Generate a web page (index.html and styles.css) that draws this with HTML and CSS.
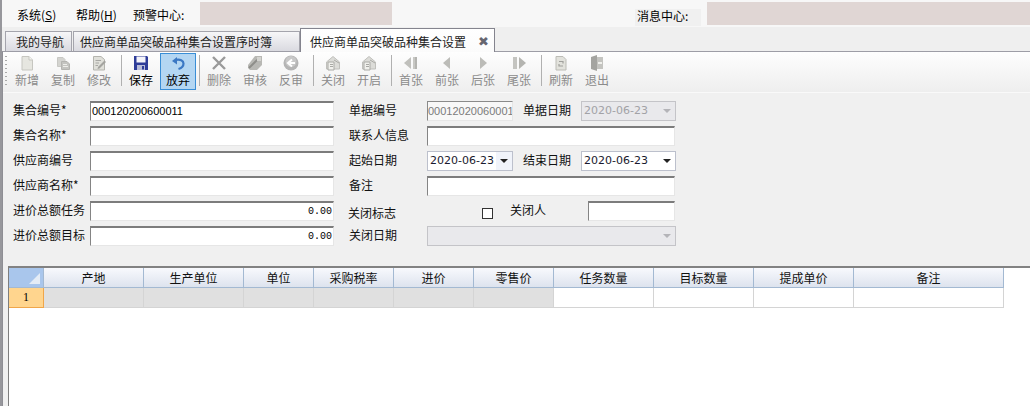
FILE: index.html
```html
<!DOCTYPE html>
<html lang="zh-CN">
<head>
<meta charset="utf-8">
<title>供应商单品突破品种集合设置</title>
<link rel="stylesheet" href="styles.css">
</head>
<body>
<div class="app">
  <header class="menubar">
    <span class="menu menu-sys">系统(<u>S</u>)</span>
    <span class="menu menu-help">帮助(<u>H</u>)</span>
    <span class="menu-label label-alert">预警中心:</span>
    <span class="pink pink-alert"></span>
    <span class="menu-label label-msg">消息中心:</span>
    <span class="pink pink-msg"></span>
  </header>
  <nav class="tabs">
    <div class="tab tab-nav">我的导航</div>
    <div class="tab tab-time">供应商单品突破品种集合设置序时簿</div>
    <div class="tab tab-active">供应商单品突破品种集合设置<span class="tab-close">✖</span></div>
  </nav>
  <main class="panel">
    <div class="toolbar">
      <span class="grip"></span>
      <div class="tool"><svg class="ico" viewBox="0 0 16 16"><path d="M3 1.5H10L13.5 5V15H3Z" fill="#e6e6e0" stroke="#c6c6c0"/><path d="M10 1.5V5H13.5" fill="#f6f6f2" stroke="#c6c6c0"/></svg><span>新增</span></div>
      <div class="tool"><svg class="ico" viewBox="0 0 16 16"><path d="M2.5 2.5H8L10 4.5V11.5H2.5Z" fill="#d4d4d0" stroke="#c8c8c4"/><path d="M6.5 6.5H12L14.5 9V14.5H6.5Z" fill="#c4c4c0" stroke="#b4b4b0"/><path d="M8 9.5H12M8 11.5H13" stroke="#eeeeea"/></svg><span>复制</span></div>
      <div class="tool"><svg class="ico" viewBox="0 0 16 16"><path d="M2.5 1.5H10L13.5 4.5V15H2.5Z" fill="#e0e0da" stroke="#b4b4ae"/><path d="M4.5 5.5H10M4.5 8H8M4.5 10.5H7" stroke="#a8a8a4"/><path d="M7 12L13.5 5.5L15 7L8.500 13.500L6.500 14Z" fill="#a4a4a0"/></svg><span>修改</span></div>
      <span class="sep"></span>
      <div class="tool on"><svg class="ico" viewBox="0 0 16 16"><path d="M1 1H14L15 2V15H1Z" fill="#2e3c98"/><path d="M3.500 1.500H12.500V7.500H3.500Z" fill="#f4f4fa"/><path d="M4 10H12V15H4Z" fill="#b8bcd8"/><path d="M9 11H11V14.500H9Z" fill="#2e3c98"/></svg><span>保存</span></div>
      <div class="tool on hot"><svg class="ico" viewBox="0 0 16 16"><path d="M2 6L7 2V9.500Z" fill="#3b78c4"/><path d="M6 4.800C10 4 13.500 5.500 13.500 8.500C13.500 11 12 13 8.500 14" fill="none" stroke="#3b78c4" stroke-width="2.200"/></svg><span>放弃</span></div>
      <span class="sep"></span>
      <div class="tool"><svg class="ico" viewBox="0 0 16 16"><path d="M2 2L14 14M14 2L2 14" stroke="#9a9a9a" stroke-width="2.400" fill="none"/></svg><span>删除</span></div>
      <div class="tool"><svg class="ico" viewBox="0 0 16 16"><path d="M8 1H15V10L10 15H3L1 13V10Z" fill="#b8b8b4"/><path d="M2 13L9 6L13 3" stroke="#8e8e8a" stroke-width="2" fill="none"/><path d="M10 2H14V6H10Z" fill="#d4d4d0"/></svg><span>审核</span></div>
      <div class="tool"><svg class="ico" viewBox="0 0 16 16"><circle cx="8" cy="8" r="7.500" fill="#b4b4b4"/><circle cx="8" cy="6.500" r="5.500" fill="#c8c8c8"/><path d="M12 8H7M9 4.500L5 8L9 11.500" stroke="#fff" stroke-width="2" fill="none"/></svg><span>反审</span></div>
      <span class="sep"></span>
      <div class="tool"><svg class="ico" viewBox="0 0 16 16"><path d="M1.500 7L8 1.500L14.500 7V14H1.500Z" fill="#dcdcd8" stroke="#c0c0bc"/><path d="M3 7H9V15H3Z" fill="#f0f0ec" stroke="#aaaaa6"/><path d="M5 9.500H8M5 11.500H8" stroke="#a8a8a4"/><path d="M9 5L14 8" stroke="#aaaaa6"/></svg><span>关闭</span></div>
      <div class="tool"><svg class="ico" viewBox="0 0 16 16"><path d="M1.500 7L8 1.500L14.500 7V14H1.500Z" fill="#dcdcd8" stroke="#c0c0bc"/><path d="M3 7H9V15H3Z" fill="#f0f0ec" stroke="#aaaaa6"/><path d="M5 9.500H8M5 11.500H8" stroke="#a8a8a4"/><path d="M9 5L14 8" stroke="#aaaaa6"/></svg><span>开启</span></div>
      <span class="sep"></span>
      <div class="tool"><svg class="ico" viewBox="0 0 16 16"><path d="M8 2V14L1 8Z" fill="#c0c0bc"/><path d="M10 2H14V14H10Z" fill="#b4b4b0"/><path d="M11 2V14" stroke="#dcdcd8"/></svg><span>首张</span></div>
      <div class="tool"><svg class="ico" viewBox="0 0 16 16"><path d="M11 2V14L4 8Z" fill="#bcbcb8"/></svg><span>前张</span></div>
      <div class="tool"><svg class="ico" viewBox="0 0 16 16"><path d="M5 2V14L12 8Z" fill="#bcbcb8"/></svg><span>后张</span></div>
      <div class="tool"><svg class="ico" viewBox="0 0 16 16"><path d="M2 2H6V14H2Z" fill="#c4c4c0"/><path d="M8 2V14L15 8Z" fill="#b4b4b0"/></svg><span>尾张</span></div>
      <span class="sep"></span>
      <div class="tool"><svg class="ico" viewBox="0 0 16 16"><path d="M3 1.500H10L13 4.500V15H3Z" fill="#e2e2dc" stroke="#bcbcb6"/><path d="M6 6.500H10V8.500M10 11H6V9" stroke="#a0a09c" fill="none" stroke-width="1.200"/></svg><span>刷新</span></div>
      <div class="tool"><svg class="ico" viewBox="0 0 16 16"><path d="M2 2H14V14H2Z" fill="#c4c4c0"/><path d="M2 2L8 0V16L2 14Z" fill="#a4a4a0"/><path d="M9 7H13V9H9Z" fill="#f0f0ec"/></svg><span>退出</span></div>
    </div>

    <form class="form">
      <label class="lbl">集合编号*</label>
      <div class="inp">000120200600011</div>
      <label class="lbl">单据编号</label>
      <div class="pair">
        <div class="inp inp-code">00012020060001</div>
        <label class="lbl lbl-mid">单据日期</label>
        <div class="sel off"><span>2020-06-23</span><i class="arrow"></i></div>
      </div>

      <label class="lbl">集合名称*</label>
      <div class="inp"></div>
      <label class="lbl">联系人信息</label>
      <div class="inp inp-right"></div>

      <label class="lbl">供应商编号</label>
      <div class="inp"></div>
      <label class="lbl">起始日期</label>
      <div class="pair">
        <div class="sel sel-start"><span>2020-06-23</span><i class="arrow arrow-box"></i></div>
        <label class="lbl lbl-mid">结束日期</label>
        <div class="sel"><span>2020-06-23</span><i class="arrow"></i></div>
      </div>

      <label class="lbl">供应商名称*</label>
      <div class="inp"></div>
      <label class="lbl">备注</label>
      <div class="inp inp-right"></div>

      <label class="lbl">进价总额任务</label>
      <div class="inp num">0.00</div>
      <label class="lbl lbl-flag">关闭标志</label>
      <div class="pair pair-close">
        <i class="check"></i>
        <label class="lbl lbl-closer">关闭人</label>
        <div class="inp inp-closer"></div>
      </div>

      <label class="lbl">进价总额目标</label>
      <div class="inp num">0.00</div>
      <label class="lbl">关闭日期</label>
      <div class="sel off sel-wide"><span></span><i class="arrow"></i></div>
    </form>

    <section class="grid-wrap">
      <div class="grid">
        <div class="gh corner"></div>
        <div class="gh">产地</div>
        <div class="gh">生产单位</div>
        <div class="gh">单位</div>
        <div class="gh">采购税率</div>
        <div class="gh">进价</div>
        <div class="gh">零售价</div>
        <div class="gh">任务数量</div>
        <div class="gh">目标数量</div>
        <div class="gh">提成单价</div>
        <div class="gh">备注</div>
        <div class="rowhead">1</div>
        <div class="gc ro"></div>
        <div class="gc ro"></div>
        <div class="gc ro"></div>
        <div class="gc ro"></div>
        <div class="gc ro"></div>
        <div class="gc ro"></div>
        <div class="gc"></div>
        <div class="gc"></div>
        <div class="gc"></div>
        <div class="gc"></div>
      </div>
    </section>
  </main>
</div>
</body>
</html>
```

FILE: styles.css
```css
* { box-sizing: border-box; }
html, body { margin: 0; padding: 0; }
body {
  width: 1030px;
  height: 406px;
  overflow: hidden;
  background: #f0f0f0;
  color: #000;
  font: 12px/16px "Noto Sans CJK SC", "Liberation Sans", sans-serif;
}
.app {
  height: 406px;
  display: flex;
  flex-direction: column;
  border-left: 2px solid #97979c;
  background: #efefef;
}

/* menu */
.menubar {
  height: 27px;
  flex: none;
  display: flex;
  align-items: flex-start;
  background: #f7f7f7;
  padding-top: 2px;
}
.menu, .menu-label { line-height: 26px; white-space: nowrap; }
.menu-sys { margin-left: 15px; width: 59px; }
.menu-help { width: 57px; }
.label-alert { width: 67px; }
.label-msg {
  width: 66px;
  margin-top: 7px;
  height: 17px;
  line-height: 13px;
  padding-left: 2px;
  background: #f0f0f0;
}
.pink { display: block; height: 23px; background: #e0d6d4; }
.pink-alert { width: 192px; margin-right: 243px; }
.pink-msg { flex: 1; margin-left: 6px; }

/* tabs */
.tabs {
  height: 24px;
  flex: none;
  display: flex;
  align-items: flex-end;
  padding-left: 3px;
  position: relative;
  z-index: 1;
}
.tab {
  height: 20px;
  line-height: 20px;
  border: 1px solid #a4a4ac;
  border-bottom: none;
  background: linear-gradient(#f6f6f8, #dadae0);
  color: #222;
  white-space: nowrap;
}
.tab-nav { width: 67px; padding-left: 10px; margin-right: 1px; }
.tab-time { width: 227px; padding-left: 6px; }
.tab-active {
  width: 195px;
  height: 24px;
  margin-bottom: -1px;
  line-height: 25px;
  padding-left: 9px;
  border-color: #84848e;
  background: linear-gradient(#fff, #fbfbfb);
  display: flex;
}
.tab-close {
  margin-left: 12px;
  font: 13px/25px "DejaVu Sans", sans-serif;
  color: #666670;
}

/* panel */
.panel {
  flex: 1;
  min-height: 0;
  display: flex;
  flex-direction: column;
  border-top: 1px solid #9d9da6;
  border-left: 1px solid #8e8e94;
  background: #f0f0f0;
}

/* toolbar */
.toolbar {
  height: 41px;
  flex: none;
  display: flex;
  padding-top: 1px;
  background: linear-gradient(#fefefe, #eeeeee);
  border-bottom: 1px solid #f9f9f9;
}
.grip {
  width: 2px;
  height: 30px;
  margin: 3px 2px 0 2px;
  background: repeating-linear-gradient(#a8a8a8 0 1px, transparent 1px 4px);
  flex: none;
}
.tool {
  width: 36px;
  height: 37px;
  flex: none;
  display: flex;
  flex-direction: column;
  align-items: center;
  padding-top: 2px;
  color: #8b8b8b;
}
.tool.on { color: #000; }
.tool.hot {
  margin: 0 -1px 0 1px;
  background: #b4d6f2;
  border: 1px solid #3a8ed6;
  padding-top: 1px;
}
.ico { width: 16px; height: 16px; display: block; flex: none; }
.tool span { line-height: 16px; margin-top: 1px; white-space: nowrap; }
.sep {
  width: 6px;
  height: 31px;
  flex: none;
  margin-top: 2px;
  background: linear-gradient(#b0b0b0, #b0b0b0) 4px 0 / 1px 100% no-repeat;
}

/* form */
.form {
  flex: none;
  display: grid;
  grid-template-columns: 77px 244px 93px 249px;
  grid-auto-rows: 20px;
  row-gap: 5px;
  column-gap: 0;
  padding: 8px 0 0 10px;
  height: 173px;
}
.lbl { line-height: 18px; white-space: nowrap; color: #111; }
.form > .lbl:nth-child(4n+3) { margin-left: 15px; }
.form > .lbl.lbl-flag { margin-left: 14px; line-height: 24px; }
.inp {
  height: 20px;
  background: #fff;
  border-style: solid;
  border-width: 2px 1px 1px 1px;
  border-color: #7c7c7c #e6e6e6 #e6e6e6 #848484;
  font: 11px/17px "Liberation Sans", sans-serif;
  padding-left: 1px;
  overflow: hidden;
  white-space: nowrap;
}
.inp-right { width: 248px; }
.num {
  text-align: right;
  font: 10px/17px "Liberation Mono", monospace;
  padding-right: 1px;
}
.pair { display: flex; }
.inp-code {
  width: 86px;
  flex: none;
  color: #7b7b7b;
  border-color: #8a8a8a #e6e6e6 #e6e6e6 #8a8a8a;
  border-top-width: 1px;
  line-height: 18px;
  padding-left: 0;
  background: #f8f8f8;
}
.lbl-mid { width: 58px; margin-left: 10px; flex: none; }
.sel {
  height: 20px;
  width: 95px;
  flex: none;
  display: flex;
  align-items: center;
  justify-content: space-between;
  background: #fff;
  border: 1px solid #bcc0cc;
  font: 11px/18px "DejaVu Sans", sans-serif;
  color: #1a1a2e;
  padding-left: 2px;
  white-space: nowrap;
}
.sel-start { width: 86px; flex: none; }
.sel.off { background: #e9e9ec; color: #a2a2a6; border-color: #c4c4c8; }
.sel-wide { width: 249px; }
.arrow {
  width: 16px;
  align-self: stretch;
  flex: none;
  position: relative;
  display: block;
}
.arrow::after {
  content: "";
  position: absolute;
  left: 4px;
  top: 7px;
  border: 4px solid transparent;
  border-top: 4px solid #222;
  border-bottom: 0;
}
.off .arrow::after { border-top-color: #b4b4b8; }
.arrow-box { background: #f0f3fa; }
.pair-close { align-items: flex-start; }
.check {
  display: block;
  width: 11px;
  height: 11px;
  flex: none;
  margin: 7px 0 0 55px;
  background: #fff;
  border: 1px solid #333;
}
.lbl-closer { margin-left: 17px; width: 78px; flex: none; }
.inp-closer { width: 87px; flex: none; }

/* grid */
.grid-wrap {
  flex: 1;
  min-height: 0;
  margin-left: 5px;
  background: #fff;
  border-top: 2px solid #828282;
  border-left: 1px solid #7e7e7e;
}
.grid {
  display: grid;
  grid-template-columns: 35px 100px 100px 70px 80px 80px 80px 100px 100px 100px 150px;
  grid-auto-rows: 20px;
  width: 995px;
}
.gh {
  text-align: center;
  line-height: 19px;
  background: linear-gradient(#f8f9fd, #dde3ee);
  border-right: 1px solid #a3b9d2;
  border-bottom: 1px solid #a3b9d2;
  color: #111;
}
.corner {
  position: relative;
  background: #a9c6ec;
}
.corner::after {
  content: "";
  position: absolute;
  right: 3px;
  bottom: 3px;
  border-style: solid;
  border-width: 0 0 11px 11px;
  border-color: transparent transparent #e4ecf6 transparent;
}
.rowhead {
  text-align: center;
  font: 12px/19px "Liberation Serif", serif;
  background: #ffd58e;
  border-right: 1px solid #f0a64a;
  border-bottom: 1px solid #f0a64a;
}
.gc {
  background: #fff;
  border-right: 1px solid #d4d4d4;
  border-bottom: 1px solid #d4d4d4;
}
.gc.ro { background: #e0e0e0; }
```
